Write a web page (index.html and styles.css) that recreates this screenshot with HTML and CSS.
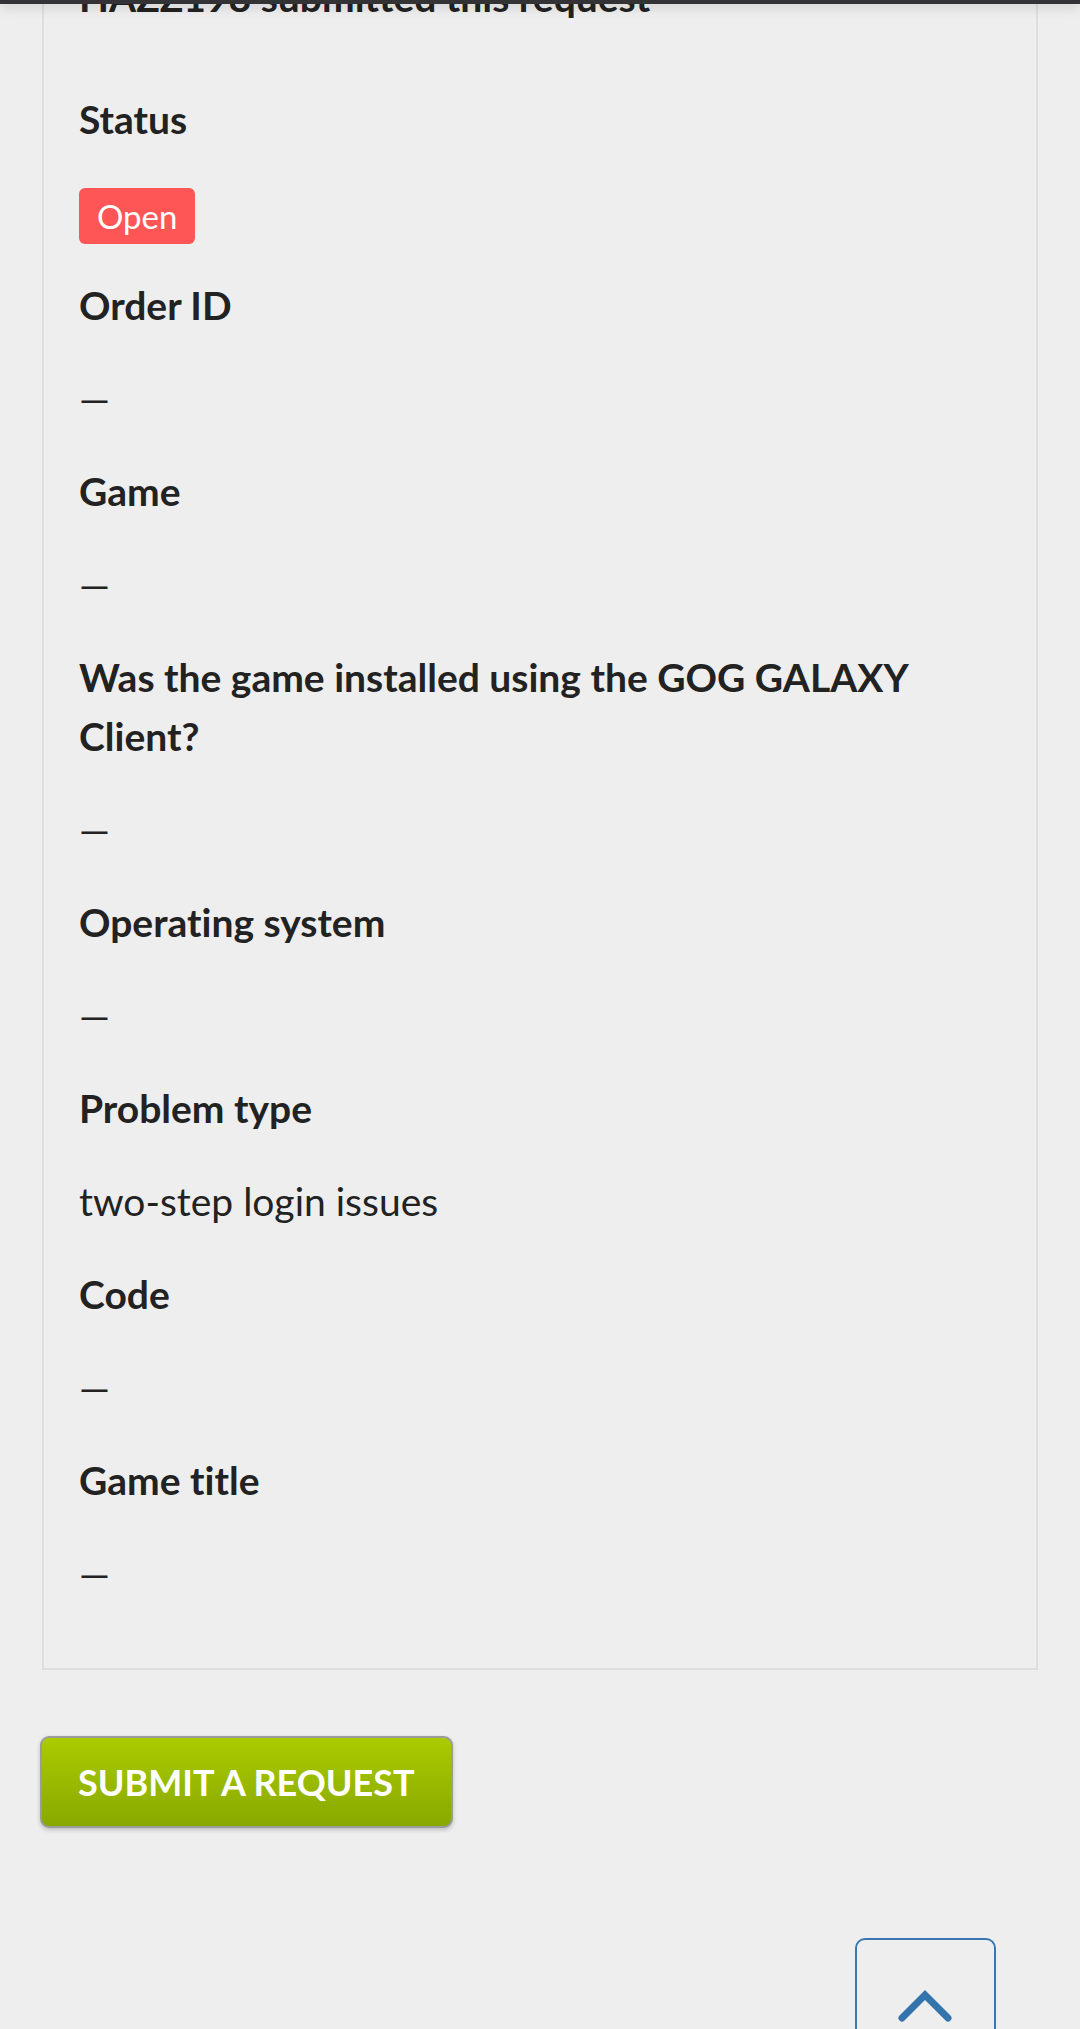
FILE: index.html
```html
<!DOCTYPE html>
<html lang="en">
<head>
    <meta charset="UTF-8">
    <meta name="viewport" content="width=device-width, initial-scale=1.0">
    <title>Request details</title>
    <link rel="stylesheet" href="styles.css">
</head>
<body>
    <div class="topbar"></div>

    <div class="page">
        <div class="request-box">
            <p class="submitter">HAZZ198 submitted this request</p>

            <dl class="details">
                <dt>Status</dt>
                <dd class="status-row"><span class="status status-open">Open</span></dd>

                <dt>Order ID</dt>
                <dd>&mdash;</dd>

                <dt>Game</dt>
                <dd>&mdash;</dd>

                <dt>Was the game installed using the GOG GALAXY Client?</dt>
                <dd>&mdash;</dd>

                <dt>Operating system</dt>
                <dd>&mdash;</dd>

                <dt>Problem type</dt>
                <dd>two-step login issues</dd>

                <dt>Code</dt>
                <dd>&mdash;</dd>

                <dt>Game title</dt>
                <dd>&mdash;</dd>
            </dl>
        </div>

        <a class="btn-submit" href="#">Submit a request</a>

        <div class="back-top-row">
            <a class="back-top" href="#" title="Back to top">
                <svg width="141" height="141" viewBox="0 0 141 141">
                    <polyline points="47,80 70,57 93,80" fill="none" stroke="#3474ad" stroke-width="7" stroke-linecap="round" stroke-linejoin="miter"/>
                </svg>
            </a>
        </div>
    </div>
</body>
</html>
```

FILE: styles.css
```css
body {
    margin: 0;
    background: #eeeeee;
    font-family: 'Lato', 'Open Sans', sans-serif;
    font-size: 39px;
    line-height: 59px;
    color: #222222;
    font-variant-ligatures: no-common-ligatures;
}
.topbar {
    position: fixed;
    top: 0;
    left: 0;
    right: 0;
    height: 4px;
    background: #333336;
    box-shadow: 0 2px 12px rgba(0,0,0,0.25);
    z-index: 10;
}
.page {
    padding: 0 42px 40px 42px;
}
.request-box {
    margin-top: -32px;
    border: 2px solid #dedede;
    border-top: none;
    padding: 0 35px 65px 35px;
}
.submitter {
    margin: 0 0 63px 0;
    font-weight: bold;
}
.details {
    margin: 0;
}
.details dt {
    font-weight: bold;
    margin: 0 0 34px 0;
}
.details dd {
    margin: 0 0 34px 0;
}
.details dd:last-child {
    margin-bottom: 0;
}
.status-row {
    height: 59px;
}
.status {
    display: inline-block;
    vertical-align: top;
    margin-top: 5px;
    font-size: 33px;
    line-height: 56px;
    padding: 0 18px;
    border-radius: 6px;
    color: white;
}
.status-open {
    background: #fe5656;
}
.btn-submit {
    display: inline-block;
    margin: 66px 0 0 -2px;
    padding: 0 36px;
    height: 88px;
    line-height: 88px;
    border: 2px solid #9c9c9c;
    border-radius: 9px;
    background: linear-gradient(#abcb00, #88a800);
    box-shadow: 0 2px 4px rgba(0,0,0,0.2);
    color: white;
    font-size: 36px;
    font-weight: bold;
    text-transform: uppercase;
    text-decoration: none;
}
.back-top-row {
    display: flex;
    justify-content: flex-end;
    margin-top: 110px;
    padding-right: 42px;
}
.back-top {
    display: block;
    width: 141px;
    height: 141px;
    box-sizing: border-box;
    border: 2px solid #3a77b0;
    border-radius: 10px;
}
.back-top svg {
    display: block;
    margin: -2px;
}
```
